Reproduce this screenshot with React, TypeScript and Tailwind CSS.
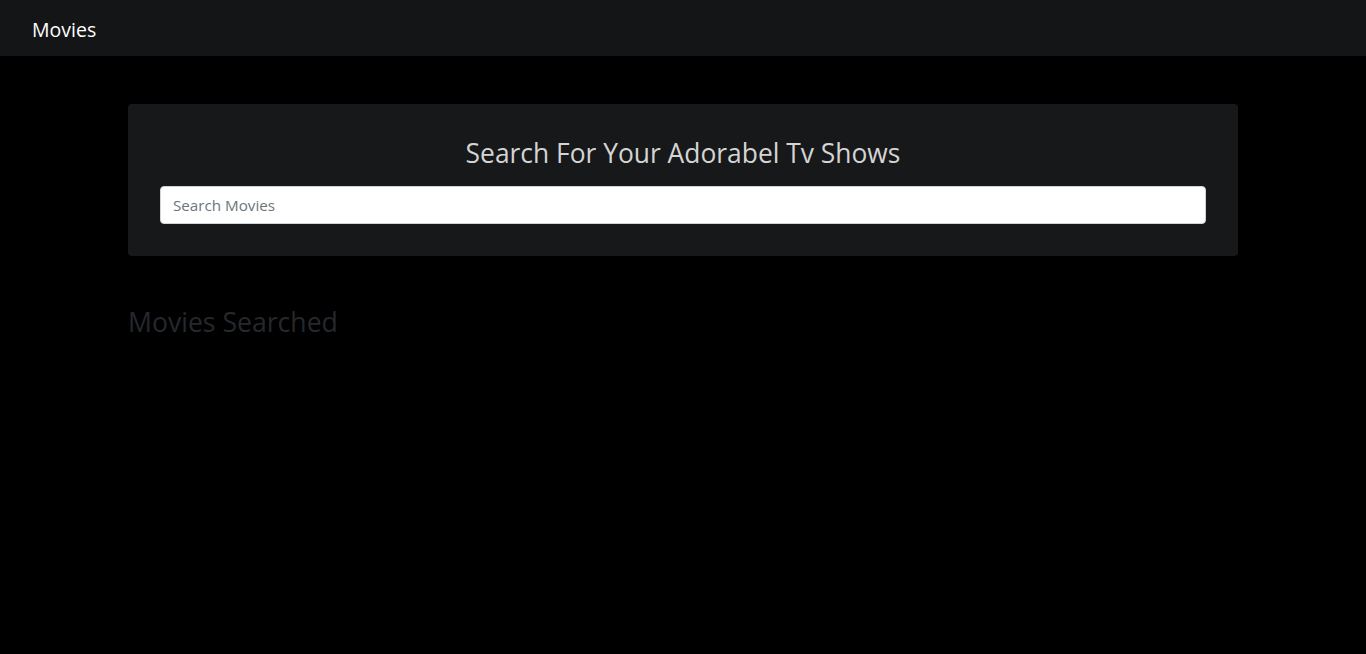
export default function App() {
    return (
        <div className="min-h-screen bg-black font-['Open_Sans',sans-serif]">
            {/* Navbar */}
            <nav className="h-14 bg-[#141517] flex items-center px-8 pt-1">
                <span className="text-white text-[19.5px]">Movies</span>
            </nav>

            <div className="w-[1110px] mx-auto pt-12">
                {/* Search card */}
                <div className="bg-[#17181a] rounded px-8 pt-[33px] pb-8">
                    <h1 className="text-center text-[#d4d4d4] text-[26.4px] leading-[33px] mb-4">
                        Search For Your Adorabel Tv Shows
                    </h1>
                    <input
                        type="text"
                        placeholder="Search Movies"
                        className="w-full h-[38px] bg-white rounded border border-[#ced4da] px-3 text-[15.2px] text-[#495057] placeholder:text-[#6c757d] outline-none"
                    />
                </div>

                <h2 className="mt-[49px] text-[26.6px] leading-[34px] text-[#25282d]">Movies Searched</h2>
            </div>
        </div>
    );
}
